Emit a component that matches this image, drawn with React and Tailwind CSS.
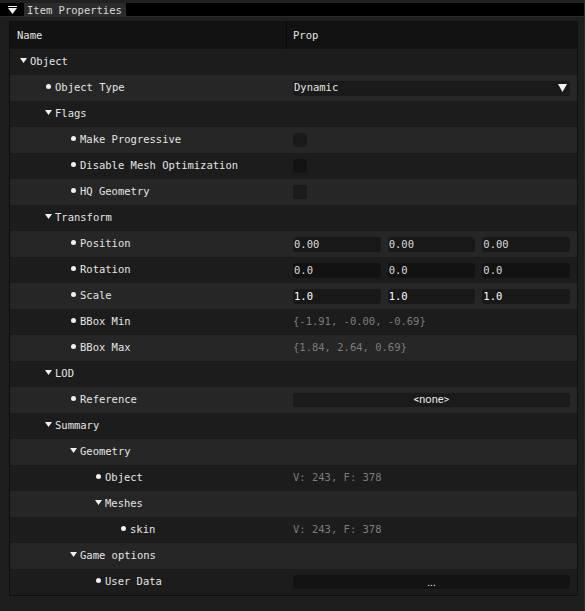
import React from "react";

const ROWS = [
  { level: 0, open: true, label: "Object" },
  { level: 1, label: "Object Type", prop: { type: "combo", value: "Dynamic" } },
  { level: 1, open: true, label: "Flags" },
  { level: 2, label: "Make Progressive", prop: { type: "check" } },
  { level: 2, label: "Disable Mesh Optimization", prop: { type: "check" } },
  { level: 2, label: "HQ Geometry", prop: { type: "check" } },
  { level: 1, open: true, label: "Transform" },
  { level: 2, label: "Position", prop: { type: "vec3", values: ["0.00", "0.00", "0.00"] } },
  { level: 2, label: "Rotation", prop: { type: "vec3", values: ["0.0", "0.0", "0.0"] } },
  { level: 2, label: "Scale", prop: { type: "vec3", values: ["1.0", "1.0", "1.0"], bright: true } },
  { level: 2, label: "BBox Min", prop: { type: "text", value: "{-1.91, -0.00, -0.69}" } },
  { level: 2, label: "BBox Max", prop: { type: "text", value: "{1.84, 2.64, 0.69}" } },
  { level: 1, open: true, label: "LOD" },
  { level: 2, label: "Reference", prop: { type: "button", value: "<none>" } },
  { level: 1, open: true, label: "Summary" },
  { level: 2, open: true, label: "Geometry" },
  { level: 3, label: "Object", prop: { type: "text", value: "V: 243, F: 378" } },
  { level: 3, open: true, label: "Meshes" },
  { level: 4, label: "skin", prop: { type: "text", value: "V: 243, F: 378" } },
  { level: 2, open: true, label: "Game options" },
  { level: 3, label: "User Data", prop: { type: "button", value: "...", low: true } },
];

const INDENT = ["pl-[10px]", "pl-[35px]", "pl-[60px]", "pl-[85px]", "pl-[110px]"];

function Arrow() {
  return (
    <svg width="7" height="5" viewBox="0 0 7 5" className="mb-[3px]">
      <polygon points="0,0 7,0 3.5,5" fill="#f0f0f0" />
    </svg>
  );
}

function Bullet() {
  return <div className="mb-[3px] ml-[1px] h-[5px] w-[5px] rounded-full bg-[#f0f0f0]" />;
}

function Prop({ prop }) {
  if (!prop) return null;
  if (prop.type === "combo") {
    return (
      <div className="flex h-[15px] items-center justify-between rounded-[3px] bg-black/30 pl-[1px] pr-[3px]">
        <span>{prop.value}</span>
        <svg width="9" height="8" viewBox="0 0 9 8">
          <polygon points="0,0 9,0 4.5,8" fill="#f0f0f0" />
        </svg>
      </div>
    );
  }
  if (prop.type === "check") {
    return <div className="h-[14px] w-[14px] rounded-[3px] bg-black/30" />;
  }
  if (prop.type === "vec3") {
    return (
      <div className="flex gap-[7px]">
        {prop.values.map((v, i) => (
          <div
            key={i}
            className={
              "h-[15px] flex-1 rounded-[3px] bg-black/35 pl-[1px] leading-[15px] " +
              (prop.bright ? "text-white" : "text-[#dcdcdc]")
            }
          >
            {v}
          </div>
        ))}
      </div>
    );
  }
  if (prop.type === "button") {
    return (
      <div
        className={
          "flex h-[14px] justify-center rounded-[3px] bg-black/30 font-['Roboto',sans-serif] text-[11px] text-[#e6e6e6] " +
          (prop.low ? "items-end leading-[12px]" : "items-center")
        }
      >
        {prop.value}
      </div>
    );
  }
  return <span className="text-[#7c7c7c]">{prop.value}</span>;
}

export default function App() {
  return (
    <div className="h-[611px] w-[585px] overflow-hidden border-r border-[#2a2a2a] bg-[#1e1e1e] font-['DejaVu_Sans_Mono',monospace] text-[10.5px] text-[#e4e4e4]">
      <div className="h-[3px] bg-[#202020]" />
      <div className="flex h-[13px] bg-black">
        <div className="flex w-[24px] flex-col items-center justify-center gap-[1px]">
          <div className="h-[1px] w-[9px] bg-[#f0f0f0]" />
          <svg width="9" height="6" viewBox="0 0 9 6">
            <polygon points="0,0 9,0 4.5,6" fill="#f0f0f0" />
          </svg>
        </div>
        <div className="w-[102px] bg-[#2b2b2b] pl-[3px] leading-[14px] text-[#d8d8d8]">
          Item Properties
        </div>
      </div>
      <div className="h-[1px] bg-[#2b2b2b]" />

      <div className="ml-[9px] mt-[4px] w-[569px] border border-[#0e0e0e]">
        <div className="flex h-[27px] items-center bg-[#121212]">
          <div className="flex h-full w-[277px] items-center border-r border-[#070707] pl-[7px]">
            Name
          </div>
          <div className="pl-[6px]">Prop</div>
        </div>
        {ROWS.map((r, i) => (
          <div
            key={i}
            className={
              "flex h-[26px] items-center " + (i % 2 === 0 ? "bg-[#1c1c1c]" : "bg-[#262626]")
            }
          >
            <div className={"flex w-[277px] items-center " + INDENT[r.level]}>
              <div className="w-[10px]">{r.open ? <Arrow /> : <Bullet />}</div>
              <span>{r.label}</span>
            </div>
            <div className="flex-1 pl-[6px] pr-[7px]">
              <Prop prop={r.prop} />
            </div>
          </div>
        ))}
      </div>
    </div>
  );
}
